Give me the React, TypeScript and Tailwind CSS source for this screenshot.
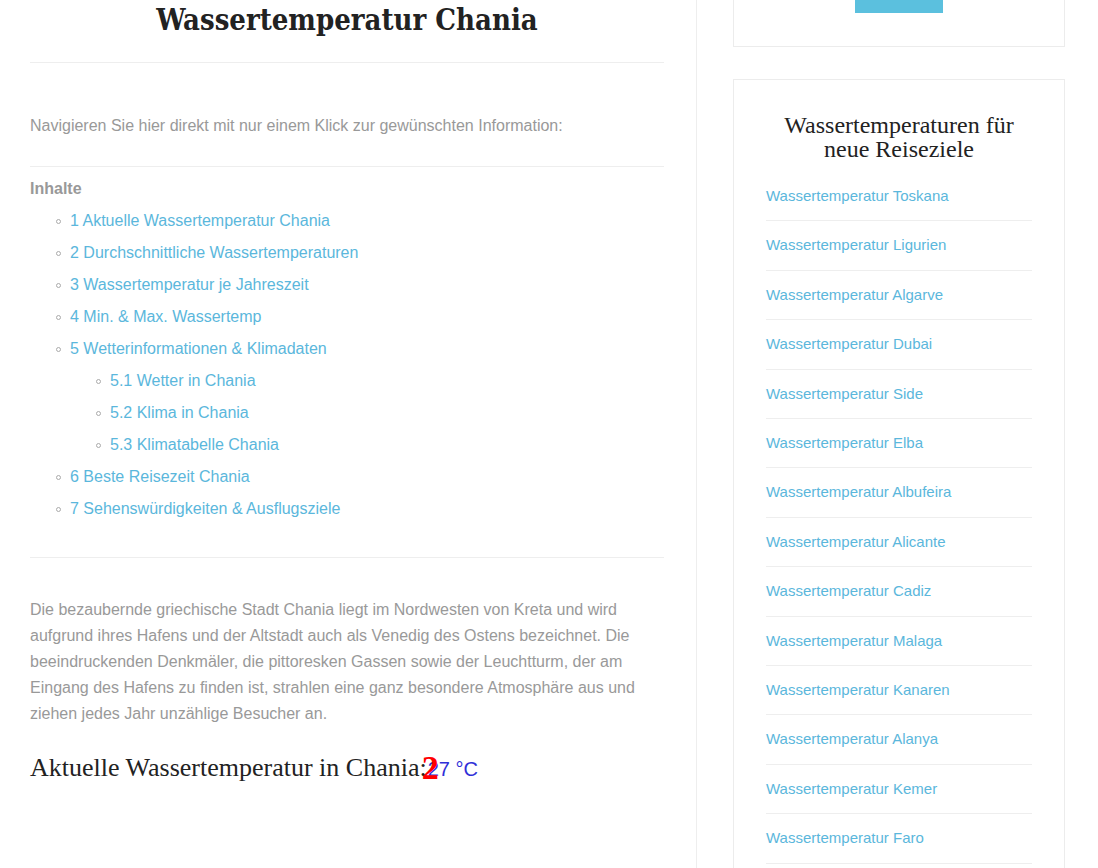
const tocItems: { label: string; level: number }[] = [
  { label: "1 Aktuelle Wassertemperatur Chania", level: 1 },
  { label: "2 Durchschnittliche Wassertemperaturen", level: 1 },
  { label: "3 Wassertemperatur je Jahreszeit", level: 1 },
  { label: "4 Min. & Max. Wassertemp", level: 1 },
  { label: "5 Wetterinformationen & Klimadaten", level: 1 },
  { label: "5.1 Wetter in Chania", level: 2 },
  { label: "5.2 Klima in Chania", level: 2 },
  { label: "5.3 Klimatabelle Chania", level: 2 },
  { label: "6 Beste Reisezeit Chania", level: 1 },
  { label: "7 Sehenswürdigkeiten & Ausflugsziele", level: 1 },
];

const destinations = [
  "Toskana",
  "Ligurien",
  "Algarve",
  "Dubai",
  "Side",
  "Elba",
  "Albufeira",
  "Alicante",
  "Cadiz",
  "Malaga",
  "Kanaren",
  "Alanya",
  "Kemer",
  "Faro",
];

const sans = "font-['Liberation_Sans',Arial,sans-serif]";

function Toc() {
  return (
    <div>
      <div className="mt-[9px] text-[16px] font-bold leading-[26px] text-[#999]">Inhalte</div>
      <ul className="mt-[3px]">
        {tocItems.map((item) => (
          <li
            key={item.label}
            className={`flex items-center text-[16px] leading-[32px] text-[#5bb7dc] ${
              item.level === 2 ? "pl-[66px]" : "pl-[26px]"
            }`}
          >
            <span className="mr-[9px] h-[5px] w-[5px] rounded-full border border-[#aaa]" />
            <a href="#">{item.label}</a>
          </li>
        ))}
      </ul>
    </div>
  );
}

function Sidebar() {
  return (
    <aside className="w-[332px] shrink-0">
      <div className="flex h-[47px] justify-center border-x border-b border-[#ececec]">
        <div className="h-[13px] w-[88px] bg-[#5bc0de]" />
      </div>
      <div className="mt-[32px] border border-[#ececec] px-[32px] pb-[40px] pt-[33px]">
        <h3 className="text-center font-['Liberation_Serif',serif] text-[24px] leading-[24px] text-[#222]">
          Wassertemperaturen für
          <br />
          neue Reiseziele
        </h3>
        <ul className="mt-[11px]">
          {destinations.map((d) => (
            <li
              key={d}
              className="border-b border-[#eee] py-[12px] text-[15px] leading-[24.4px] text-[#5bb7dc]"
            >
              <a href="#">Wassertemperatur {d}</a>
            </li>
          ))}
        </ul>
      </div>
    </aside>
  );
}

export default function App() {
  return (
    <div className={`flex h-[868px] overflow-hidden bg-white ${sans}`}>
      <main className="w-[697px] shrink-0 border-r border-[#eee] pl-[30px] pr-[32px]">
        <h1 className="text-center font-['DejaVu_Serif_Condensed','DejaVu_Serif',serif] text-[29px] font-bold leading-[40px] text-[#222]">
          Wassertemperatur Chania
        </h1>
        <hr className="mt-[22px] border-[#eee]" />
        <p className="mt-[50px] text-[16px] leading-[26px] text-[#999]">
          Navigieren Sie hier direkt mit nur einem Klick zur gewünschten Information:
        </p>
        <hr className="mt-[27px] border-[#eee]" />
        <Toc />
        <hr className="mt-[32px] border-[#eee]" />
        <p className="mt-[39px] text-[16px] leading-[26px] text-[#999]">
          Die bezaubernde griechische Stadt Chania liegt im Nordwesten von Kreta und wird aufgrund
          ihres Hafens und der Altstadt auch als Venedig des Ostens bezeichnet. Die beeindruckenden
          Denkmäler, die pittoresken Gassen sowie der Leuchtturm, der am Eingang des Hafens zu finden
          ist, strahlen eine ganz besondere Atmosphäre aus und ziehen jedes Jahr unzählige Besucher
          an.
        </p>
        <h2 className="mt-[25px] flex items-baseline font-['Liberation_Serif',serif] text-[26px] leading-[32px] text-[#222]">
          Aktuelle Wassertemperatur in Chania:
          <span className="relative ml-[1px] font-['Liberation_Sans',Arial,sans-serif] text-[20px] text-[#3030d8]">
            27 °C
            <span className="absolute left-[-6px] top-[-2px] font-['Liberation_Serif',serif] text-[34px] font-bold leading-none text-[#ff0000]">
              2
            </span>
          </span>
        </h2>
      </main>
      <div className="pl-[36px]">
        <Sidebar />
      </div>
    </div>
  );
}
